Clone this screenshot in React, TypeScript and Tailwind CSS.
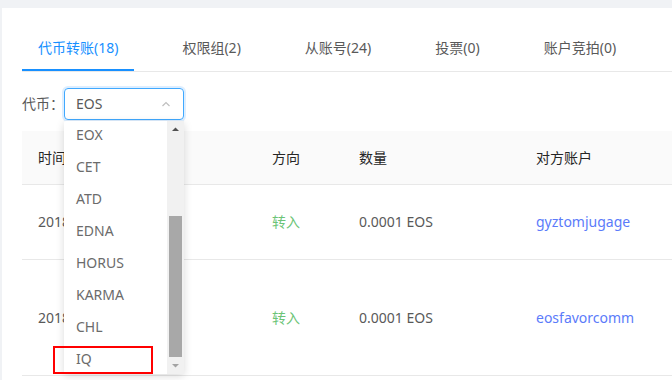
const tabs = ["代币转账(18)", "权限组(2)", "从账号(24)", "投票(0)", "账户竞拍(0)"];
const options = ["EOX", "CET", "ATD", "EDNA", "HORUS", "KARMA", "CHL", "IQ"];
const rows = [
  { time: "2018", amount: "0.0001 EOS", to: "gyztomjugage", h: "h-[75px]" },
  { time: "2018", amount: "0.0001 EOS", to: "eosfavorcomm", h: "h-[116px]" },
];

export default function App() {
  return (
    <div
      className="h-[380px] w-[672px] overflow-hidden bg-[#f0f2f5] pt-[8px] pl-[2px] text-[14px] leading-[22px] text-[#595959]"
      style={{ fontFamily: '"Noto Sans", "Noto Sans CJK SC", sans-serif' }}
    >
      <div className="h-full bg-white pl-[20px] pt-[17px]">
        {/* tabs */}
        <div className="flex border-b border-[#e8e8e8]">
          {tabs.map((t, i) => (
            <div
              key={t}
              className={
                i === 0
                  ? "mr-[32px] border-b-2 border-[#1890ff] px-[16px] pt-[12px] pb-[10px] leading-[22px] text-[#1890ff]"
                  : "mr-[32px] border-b-2 border-transparent px-[16px] pt-[12px] pb-[10px] leading-[22px]"
              }
            >
              {t}
            </div>
          ))}
        </div>

        {/* filter */}
        <div className="relative mt-[16px] flex items-center">
          <span className="w-[42px] text-[#595959]">代币：</span>
          <div className="relative">
            <div className="flex h-[32px] w-[120px] items-center justify-between rounded-[4px] border border-[#40a9ff] px-[11px] shadow-[0_0_0_2px_rgba(24,144,255,0.15)]">
              <span className="text-[#595959]">EOS</span>
              <svg width="12" height="12" viewBox="0 0 12 12" className="text-[#bfbfbf]">
                <path d="M2.5 8 L6 4.5 L9.5 8" fill="none" stroke="currentColor" strokeWidth="1.2" />
              </svg>
            </div>

            {/* dropdown */}
            <div className="absolute left-0 top-[33px] z-10 flex h-[253px] w-[120px] rounded-[2px] bg-white shadow-[0_2px_8px_rgba(0,0,0,0.15)]">
              <div className="-mt-[2px] flex-1">
                {options.map((o) => (
                  <div key={o} className="relative h-[32px] pl-[12px] leading-[32px] text-[#6b6b6b]">
                    {o}
                    {o === "IQ" && (
                      <div className="absolute left-[-11px] top-[3px] h-[28px] w-[100px] border-2 border-[#ff0000]" />
                    )}
                  </div>
                ))}
              </div>
              <div className="flex w-[17px] flex-col items-center bg-[#f1f1f1]">
                <svg width="17" height="17" viewBox="0 0 17 17">
                  <path d="M5 10 L8.5 6.5 L12 10 Z" fill="#505050" />
                </svg>
                <div className="mt-[78px] h-[141px] w-[13px] bg-[#a8a8a8]" />
                <svg width="17" height="17" viewBox="0 0 17 17">
                  <path d="M5 7 L12 7 L8.5 10.5 Z" fill="#a3a3a3" />
                </svg>
              </div>
            </div>
          </div>
        </div>

        {/* table */}
        <div className="mt-[11px]">
          <div className="flex h-[54px] items-center border-b border-[#e8e8e8] bg-[#fafafa] text-[#262626]">
            <div className="w-[250px] pl-[16px]">时间</div>
            <div className="w-[87px]">方向</div>
            <div className="w-[177px]">数量</div>
            <div>对方账户</div>
          </div>
          {rows.map((r, i) => (
            <div key={i} className={`flex items-center border-b border-[#e8e8e8] ${r.h}`}>
              <div className="w-[250px] pl-[16px]">{r.time}</div>
              <div className="w-[87px] text-[#6cc477]">转入</div>
              <div className="w-[177px]">{r.amount}</div>
              <div className="text-[#5b7bfa]">{r.to}</div>
            </div>
          ))}
        </div>
      </div>
    </div>
  );
}
